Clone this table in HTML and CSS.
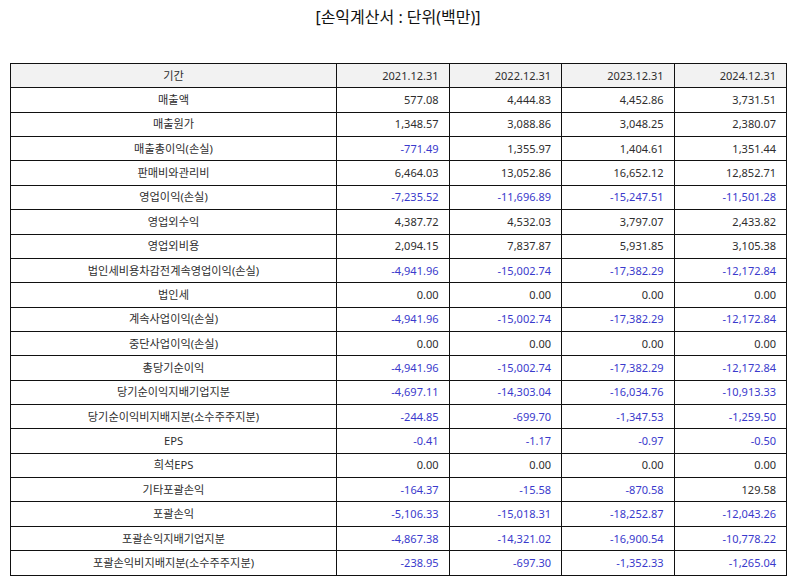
FILE: index.html
```html
<!DOCTYPE html>
<html lang="ko">
<head>
<meta charset="utf-8">
<title>손익계산서</title>
<link rel="stylesheet" href="styles.css">
</head>
<body>
<h1 class="title">[손익계산서 : 단위(백만)]</h1>
<table class="fin">
<colgroup><col class="c-name"><col class="c-val"><col class="c-val"><col class="c-val"><col class="c-val"></colgroup>
<thead>
<tr><th>기간</th><th>2021.12.31</th><th>2022.12.31</th><th>2023.12.31</th><th>2024.12.31</th></tr>
</thead>
<tbody>
<tr><td>매출액</td><td>577.08</td><td>4,444.83</td><td>4,452.86</td><td>3,731.51</td></tr>
<tr><td>매출원가</td><td>1,348.57</td><td>3,088.86</td><td>3,048.25</td><td>2,380.07</td></tr>
<tr><td>매출총이익(손실)</td><td class="neg">-771.49</td><td>1,355.97</td><td>1,404.61</td><td>1,351.44</td></tr>
<tr><td>판매비와관리비</td><td>6,464.03</td><td>13,052.86</td><td>16,652.12</td><td>12,852.71</td></tr>
<tr><td>영업이익(손실)</td><td class="neg">-7,235.52</td><td class="neg">-11,696.89</td><td class="neg">-15,247.51</td><td class="neg">-11,501.28</td></tr>
<tr><td>영업외수익</td><td>4,387.72</td><td>4,532.03</td><td>3,797.07</td><td>2,433.82</td></tr>
<tr><td>영업외비용</td><td>2,094.15</td><td>7,837.87</td><td>5,931.85</td><td>3,105.38</td></tr>
<tr><td>법인세비용차감전계속영업이익(손실)</td><td class="neg">-4,941.96</td><td class="neg">-15,002.74</td><td class="neg">-17,382.29</td><td class="neg">-12,172.84</td></tr>
<tr><td>법인세</td><td>0.00</td><td>0.00</td><td>0.00</td><td>0.00</td></tr>
<tr><td>계속사업이익(손실)</td><td class="neg">-4,941.96</td><td class="neg">-15,002.74</td><td class="neg">-17,382.29</td><td class="neg">-12,172.84</td></tr>
<tr><td>중단사업이익(손실)</td><td>0.00</td><td>0.00</td><td>0.00</td><td>0.00</td></tr>
<tr><td>총당기순이익</td><td class="neg">-4,941.96</td><td class="neg">-15,002.74</td><td class="neg">-17,382.29</td><td class="neg">-12,172.84</td></tr>
<tr><td>당기순이익지배기업지분</td><td class="neg">-4,697.11</td><td class="neg">-14,303.04</td><td class="neg">-16,034.76</td><td class="neg">-10,913.33</td></tr>
<tr><td>당기순이익비지배지분(소수주주지분)</td><td class="neg">-244.85</td><td class="neg">-699.70</td><td class="neg">-1,347.53</td><td class="neg">-1,259.50</td></tr>
<tr><td>EPS</td><td class="neg">-0.41</td><td class="neg">-1.17</td><td class="neg">-0.97</td><td class="neg">-0.50</td></tr>
<tr><td>희석EPS</td><td>0.00</td><td>0.00</td><td>0.00</td><td>0.00</td></tr>
<tr><td>기타포괄손익</td><td class="neg">-164.37</td><td class="neg">-15.58</td><td class="neg">-870.58</td><td>129.58</td></tr>
<tr><td>포괄손익</td><td class="neg">-5,106.33</td><td class="neg">-15,018.31</td><td class="neg">-18,252.87</td><td class="neg">-12,043.26</td></tr>
<tr><td>포괄손익지배기업지분</td><td class="neg">-4,867.38</td><td class="neg">-14,321.02</td><td class="neg">-16,900.54</td><td class="neg">-10,778.22</td></tr>
<tr><td>포괄손익비지배지분(소수주주지분)</td><td class="neg">-238.95</td><td class="neg">-697.30</td><td class="neg">-1,352.33</td><td class="neg">-1,265.04</td></tr>
</tbody>
</table>
</body>
</html>
```

FILE: styles.css
```css
html, body {
  margin: 0;
  padding: 0;
  background: #ffffff;
}

body {
  padding: 0 8px 0 10px;
  font-family: "Noto Sans", "Noto Sans CJK KR", "Liberation Sans", sans-serif;
  color: #222222;
}

.title {
  margin: 0;
  padding-top: 5px;
  height: 63px;
  box-sizing: border-box;
  text-align: center;
  font-size: 16px;
  font-weight: normal;
  line-height: 24px;
  color: #111111;
}

.fin {
  width: 776px;
  border-collapse: collapse;
  table-layout: fixed;
  font-size: 11px;
}

.c-name {
  width: 326px;
}

.c-val {
  width: 112.5px;
}

.fin th,
.fin td {
  border: 1px solid #111111;
  height: 23.36px;
  padding: 0 10px;
  line-height: 14px;
  font-weight: normal;
  white-space: nowrap;
  text-align: right;
  color: #2e2e2e;
}

.fin th {
  background: #f2f2f2;
}

.fin th:first-child,
.fin td:first-child {
  text-align: center;
  font-size: 11.2px;
}

.fin td.neg {
  color: #3a3acc;
}
```
